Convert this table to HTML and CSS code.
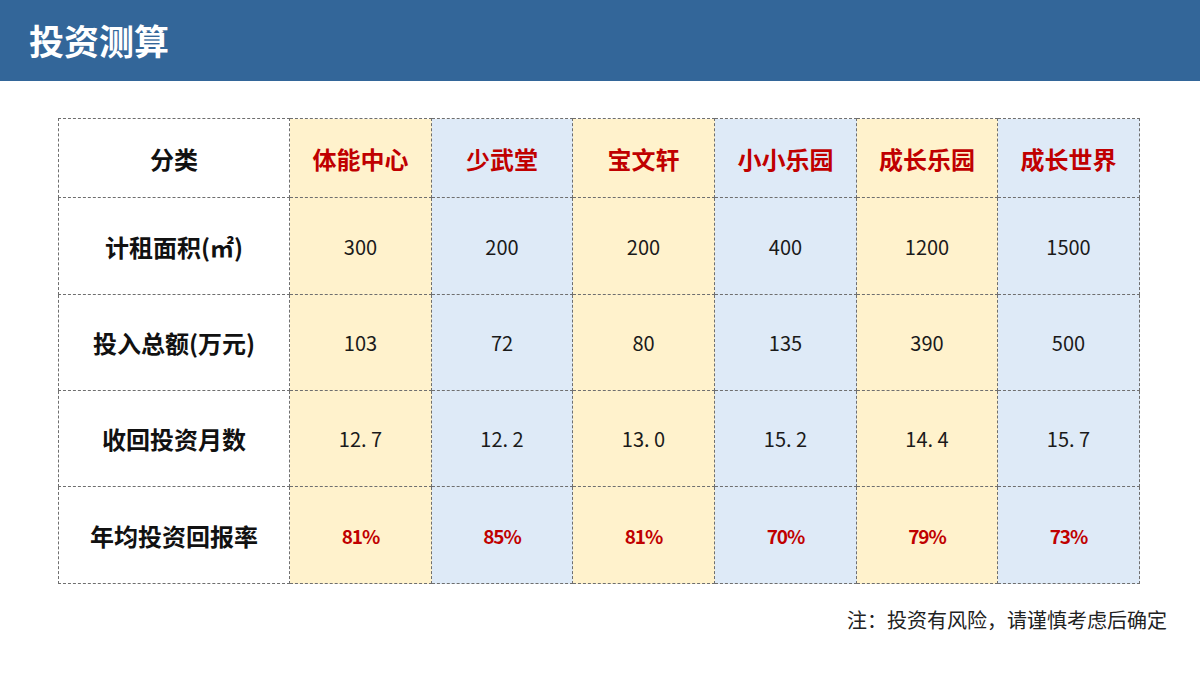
FILE: index.html
```html
<!DOCTYPE html>
<html lang="zh">
<head>
<meta charset="utf-8">
<title>投资测算</title>
<link rel="stylesheet" href="styles.css">
</head>
<body>
<header class="topbar"><h1 class="title">投资测算</h1></header>
<main class="content">
<table class="calc">
<colgroup>
<col class="c-label"><col class="c-142"><col class="c-141"><col class="c-142"><col class="c-142"><col class="c-141"><col class="c-142">
</colgroup>
<tr class="r-head">
<th class="label">分类</th>
<th class="y name">体能中心</th>
<th class="b name">少武堂</th>
<th class="y name">宝文轩</th>
<th class="b name">小小乐园</th>
<th class="y name">成长乐园</th>
<th class="b name">成长世界</th>
</tr>
<tr class="r-97">
<th class="label">计租面积(㎡)</th>
<td class="y">300</td><td class="b">200</td><td class="y">200</td><td class="b">400</td><td class="y">1200</td><td class="b">1500</td>
</tr>
<tr class="r-96">
<th class="label">投入总额(万元)</th>
<td class="y">103</td><td class="b">72</td><td class="y">80</td><td class="b">135</td><td class="y">390</td><td class="b">500</td>
</tr>
<tr class="r-96">
<th class="label">收回投资月数</th>
<td class="y">12. 7</td><td class="b">12. 2</td><td class="y">13. 0</td><td class="b">15. 2</td><td class="y">14. 4</td><td class="b">15. 7</td>
</tr>
<tr class="r-97">
<th class="label">年均投资回报率</th>
<td class="y pct">81%</td><td class="b pct">85%</td><td class="y pct">81%</td><td class="b pct">70%</td><td class="y pct">79%</td><td class="b pct">73%</td>
</tr>
</table>
<p class="note">注：投资有风险，请谨慎考虑后确定</p>
</main>
</body>
</html>
```
FILE: styles.css
```css
html, body {
  margin: 0;
  padding: 0;
  background: #ffffff;
  font-family: "Noto Sans CJK SC", "Noto Sans", sans-serif;
  color: #111;
}
.topbar {
  height: 81px;
  background: #336699;
  display: flex;
  align-items: center;
  padding-left: 29px;
  box-sizing: border-box;
}
.title {
  margin: 0;
  color: #ffffff;
  font-size: 35px;
  font-weight: 700;
  line-height: 1;
  padding-bottom: 2px;
}
.content {
  padding: 37px 33px 0 58px;
}
.calc {
  border-collapse: collapse;
  table-layout: fixed;
  width: 1081px;
}
.c-label { width: 231px; }
.c-142 { width: 142px; }
.c-141 { width: 141px; }
.calc th, .calc td {
  border: 1px dashed #6f6f6f;
  text-align: center;
  vertical-align: middle;
  padding: 0;
}
.r-head { height: 79px; }
.r-97 { height: 97px; }
.r-96 { height: 96px; }
.label {
  background: #ffffff;
  font-size: 24px;
  font-weight: 700;
  color: #111;
}
.name {
  font-size: 24px;
  font-weight: 700;
  color: #c00000;
}
.y { background: #fff2cc; }
.b { background: #deeaf7; }
.calc td {
  font-size: 20px;
  font-weight: 400;
  color: #1a1a1a;
}
.calc td.pct {
  font-size: 19px;
  font-weight: 700;
  color: #c00000;
  letter-spacing: -1px;
}
.note {
  margin: 23px 0 0 0;
  text-align: right;
  font-size: 20px;
  line-height: 26px;
  color: #222;
}
```
